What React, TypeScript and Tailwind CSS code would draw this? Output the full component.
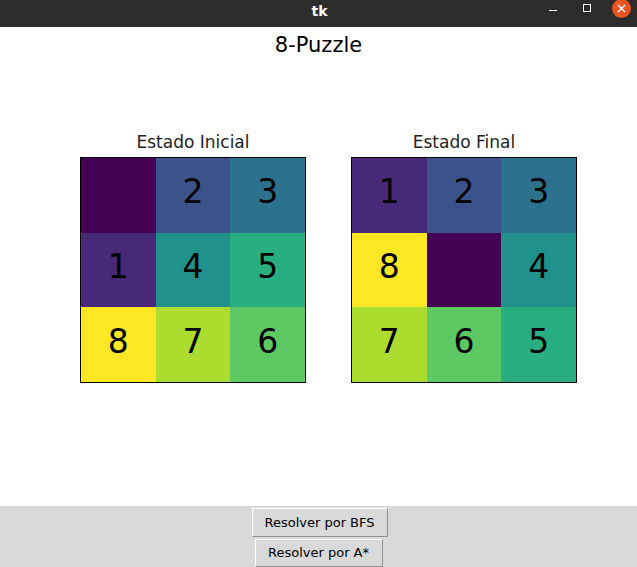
const viridis = [
  '#440154',
  '#482878',
  '#3b528b',
  '#2c728e',
  '#21918c',
  '#28ae80',
  '#5ec962',
  '#addc30',
  '#fde725',
];

const inicial = [
  [0, 2, 3],
  [1, 4, 5],
  [8, 7, 6],
];

const final = [
  [1, 2, 3],
  [8, 0, 4],
  [7, 6, 5],
];

const Board = ({ title, board }: { title: string; board: number[][] }) => (
  <div className="flex w-[226px] flex-col items-center">
    <div className="mb-[6px] text-[17px] leading-none text-[#222]">{title}</div>
    <div className="grid h-[226px] w-[226px] grid-cols-3 grid-rows-3 border border-black">
      {board.flat().map((v, i) => (
        <div
          key={i}
          className="flex items-center justify-center pb-[7px] text-[33px] leading-none text-black"
          style={{ backgroundColor: viridis[v] }}
        >
          {v !== 0 ? v : ''}
        </div>
      ))}
    </div>
  </div>
);

export default function App() {
  return (
    <div
      className="flex h-[567px] w-[637px] flex-col overflow-hidden bg-white"
      style={{ fontFamily: '"DejaVu Sans", sans-serif' }}
    >
      {/* window title bar */}
      <div className="relative flex h-[27px] shrink-0 items-center justify-center bg-[#2c2c2c]">
        <span className="pb-[4px] pl-[2px] text-[14px] font-bold text-white">tk</span>
        <div className="absolute right-0 top-0 flex h-[27px] items-start">
          <div className="mr-[26px] mt-[10px] h-[1px] w-[8px] bg-white" />
          <div className="mr-[21px] mt-[4px] h-[8px] w-[8px] border border-white" />
          <div className="mr-[6px] mt-[-1px] flex h-[19px] w-[19px] items-center justify-center rounded-full bg-[#e95420]">
            <svg width="9" height="9" viewBox="0 0 9 9">
              <path d="M1 1 L8 8 M8 1 L1 8" stroke="white" strokeWidth="1.4" />
            </svg>
          </div>
        </div>
      </div>

      {/* figure */}
      <div className="flex flex-1 flex-col items-center pt-[8px]">
        <div className="text-[21px] leading-none text-black">8-Puzzle</div>
        <div className="mt-[78px] flex w-full gap-[45px] pl-[80px]">
          <Board title="Estado Inicial" board={inicial} />
          <Board title="Estado Final" board={final} />
        </div>
      </div>

      {/* buttons */}
      <div className="flex h-[61px] shrink-0 flex-col items-center bg-[#d9d9d9] pt-[2px]">
        <button className="ml-[2px] flex h-[29px] w-[136px] items-center justify-center border border-b-[#8f8f8f] border-l-white border-r-[#8f8f8f] border-t-white bg-[#d9d9d9] text-[13px] text-black">
          Resolver por BFS
        </button>
        <button className="mt-[2px] flex h-[29px] w-[128px] items-center justify-center border border-b-[#8f8f8f] border-l-white border-r-[#8f8f8f] border-t-white bg-[#d9d9d9] text-[13px] text-black">
          Resolver por A*
        </button>
      </div>
    </div>
  );
}
